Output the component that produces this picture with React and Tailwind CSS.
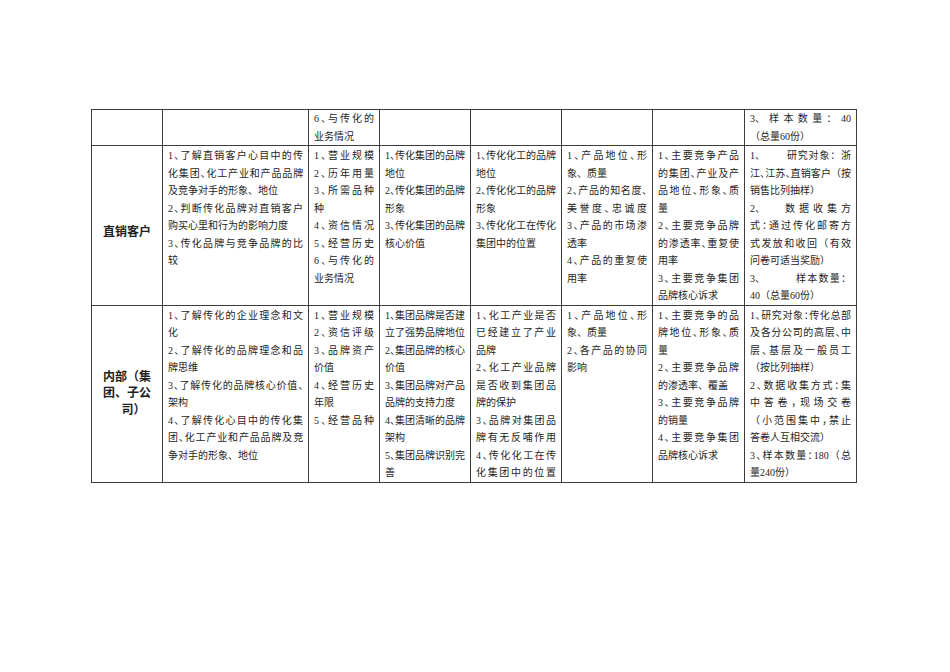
import React from "react";

// 调研方案表格（续页）
const COLS = ["w-[71px]", "w-[146px]", "w-[71px]", "w-[91px]", "w-[91px]", "w-[91px]", "w-[92px]", "w-[112px]"];

const ROWS = [
  {
    pad: "pt-0",
    head: null,
    cells: [
      [],
      ["|6、与传化的", "业务情况"],
      [],
      [],
      [],
      [],
      [{ l: "3、", r: "样本数量：40", cls: "ml-[4px]" }, "（总量60份）"],
    ],
  },
  {
    pad: "pt-px",
    head: { lines: ["直销客户"], cls: "pt-[14px]" },
    cells: [
      ["|1、了解直销客户心目中的传", "|化集团、化工产业和产品品牌", "及竞争对手的形象、地位", "|2、判断传化品牌对直销客户", "购买心里和行为的影响力度", "|3、传化品牌与竞争品牌的比", "较"],
      ["|1、营业规模", "|2、历年用量", "|3、所需品种", "种", "|4、资信情况", "|5、经营历史", "|6、与传化的", "业务情况"],
      ["|1、传化集团的品牌", "地位", "|2、传化集团的品牌", "形象", "|3、传化集团的品牌", "核心价值"],
      ["|1、传化化工的品牌", "地位", "|2、传化化工的品牌", "形象", "|3、传化化工在传化", "集团中的位置"],
      ["|1、产品地位、形", "象、质量", "|2、产品的知名度、", "|美誉度、忠诚度", "|3、产品的市场渗", "透率", "|4、产品的重复使", "用率"],
      ["|1、主要竞争产品", "|的集团、产业及产", "|品地位、形象、质", "量", "|2、主要竞争品牌", "|的渗透率、重复使", "用率", "|3、主要竞争集团", "品牌核心诉求"],
      [
        { l: "1、", r: "研究对象：浙", cls: "ml-[22px]" },
        "|江、江苏、直销客户（按",
        "销售比列抽样）",
        { l: "2、", r: "数据收集方", cls: "ml-[20px]" },
        "|式：通过传化邮寄方",
        "|式发放和收回（有效",
        "问卷可适当奖励）",
        { l: "3、", r: "样本数量：", cls: "ml-[31px]" },
        "40（总量60份）",
      ],
    ],
  },
  {
    pad: "pt-px",
    head: { lines: ["内部（集", "团、子公", "司）"], cls: "" },
    cells: [
      ["|1、了解传化的企业理念和文", "化", "|2、了解传化的品牌理念和品", "牌思维", "|3、了解传化的品牌核心价值、", "架构", "|4、了解传化心目中的传化集", "|团、化工产业和产品品牌及竞", "争对手的形象、地位"],
      ["|1、营业规模", "|2、资信评级", "|3、品牌资产", "价值", "|4、经营历史", "年限", "|5、经营品种"],
      ["|1、集团品牌是否建", "|立了强势品牌地位", "|2、集团品牌的核心", "价值", "|3、集团品牌对产品", "品牌的支持力度", "|4、集团清晰的品牌", "架构", "|5、集团品牌识别完", "善"],
      ["|1、化工产业是否", "|已经建立了产业", "品牌", "|2、化工产业品牌", "|是否收到集团品", "牌的保护", "|3、品牌对集团品", "|牌有无反哺作用", "|4、传化化工在传", "|化集团中的位置"],
      ["|1、产品地位、形", "象、质量", "|2、各产品的协同", "影响"],
      ["|1、主要竞争的品", "|牌地位、形象、质", "量", "|2、主要竞争品牌", "的渗透率、覆盖", "|3、主要竞争品牌", "的销量", "|4、主要竞争集团", "品牌核心诉求"],
      ["|1、研究对象：传化总部", "|及各分公司的高层、中", "|层、基层及一般员工", "（按比列抽样）", "|2、数据收集方式：集", "|中答卷，现场交卷", "|（小范围集中，禁止", "答卷人互相交流）", "|3、样本数量：180（总", "量240份）"],
    ],
  },
];

// 标点挤压：两端对齐的行里把全角标点压成半角
function squeeze(text, tight) {
  return Array.from(text).map((ch, i) => {
    if (tight && "、，：）".includes(ch)) return <span key={i} className="tracking-[-0.5em]">{ch}</span>;
    return ch;
  });
}

function Line({ line }) {
  if (typeof line === "object") {
    return (
      <div className="flex whitespace-nowrap leading-[17.5px]">
        <span>{line.l}</span>
        <div className={`flex-1 text-justify [text-align-last:justify] ${line.cls}`}>{line.r}</div>
      </div>
    );
  }
  const justify = line.startsWith("|");
  const t = justify ? line.slice(1) : line;
  return (
    <div className={justify ? "whitespace-nowrap leading-[17.5px] text-justify [text-align-last:justify]" : "whitespace-nowrap leading-[17.5px]"}>
      {squeeze(t, justify)}
    </div>
  );
}

export default function App() {
  return (
    <div className="min-h-screen bg-white pt-[109px] pl-[91px] font-['Liberation_Serif','Noto_Sans_CJK_SC',serif] text-[10px] text-[#1e1e1e]">
      <table className="table-fixed border-collapse w-[765px]">
        <colgroup>
          {COLS.map((c, i) => (
            <col key={i} className={c} />
          ))}
        </colgroup>
        <tbody>
          {ROWS.map((row, ri) => (
            <tr key={ri}>
              <td className={`border border-[#3c3c3c] align-middle px-[4px] ${row.head ? row.head.cls : ""}`}>
                {row.head &&
                  row.head.lines.map((l, i) => (
                    <div
                      key={i}
                      className={
                        i === 2
                          ? "text-center font-bold text-[12px] leading-[16.3px] pl-[13px]"
                          : "text-center font-bold text-[12px] leading-[16.3px]"
                      }
                    >
                      {l}
                    </div>
                  ))}
              </td>
              {row.cells.map((lines, ci) => (
                <td key={ci} className={`border border-[#3c3c3c] align-top px-[5px] pb-0 ${row.pad}`}>
                  {lines.length === 0 ? <div className="leading-[17.5px]">&nbsp;</div> : lines.map((l, i) => <Line key={i} line={l} />)}
                </td>
              ))}
            </tr>
          ))}
        </tbody>
      </table>
    </div>
  );
}
